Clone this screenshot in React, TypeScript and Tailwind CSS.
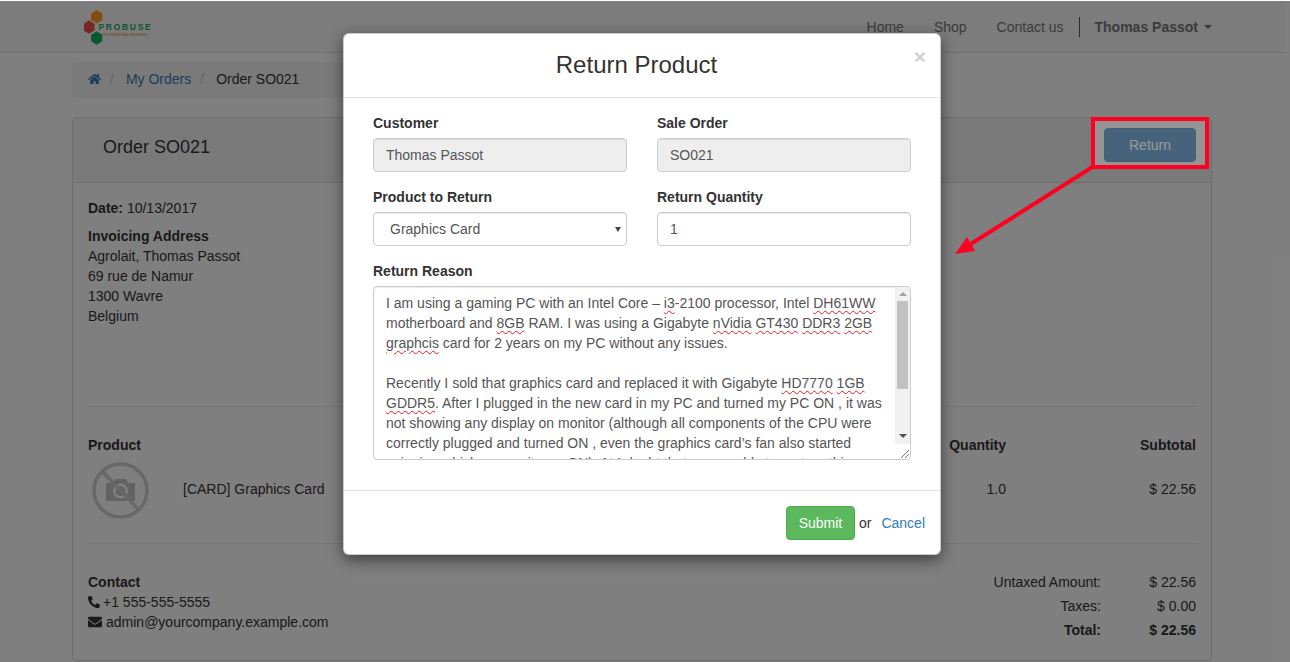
import { FaEnvelope, FaHome, FaPhone } from "react-icons/fa";

const spell = "underline decoration-wavy decoration-[#e02020] decoration-1 underline-offset-2";

function Typo({ children }: { children: string }) {
  return <span className={spell}>{children}</span>;
}

function Logo() {
  return (
    <svg width="74" height="36" viewBox="0 0 74 36" className="block">
      <polygon points="12.7,1 18.3,4.5 18.3,11 12.7,14.4 7.1,11 7.1,4.5" fill="#ff9a20" />
      <polygon points="5,11.3 10.6,14.8 10.6,21.3 5,24.7 -0.6,21.3 -0.6,14.8" fill="#f05050" />
      <polygon points="12.7,22.3 18.3,25.8 18.3,32.3 12.7,35.7 7.1,32.3 7.1,25.8" fill="#10b060" />
      <text x="14.5" y="21" fontSize="8.5" fontWeight="700" letterSpacing="1.7" fill="#20a868" fontFamily="Liberation Sans, sans-serif">
        PROBUSE
      </text>
      <text x="19" y="26.5" fontSize="3.4" fill="#d08a40" fontFamily="Liberation Sans, sans-serif">
        PROFESSIONAL BUSINESS
      </text>
    </svg>
  );
}

function NoPhoto() {
  return (
    <svg width="57" height="57" viewBox="0 0 57 57" className="block">
      <circle cx="28.5" cy="28.5" r="26.5" fill="none" stroke="#d0d0d0" strokeWidth="3.5" />
      <path d="M14 21h7l3-4h10l2 4h7v18H14z" fill="#c4c4c4" />
      <circle cx="28.5" cy="29" r="7.5" fill="#ffffff" />
      <circle cx="28.5" cy="29" r="5" fill="#c4c4c4" />
      <path d="M10 9 L47 48" stroke="#d0d0d0" strokeWidth="3.5" />
    </svg>
  );
}

function PageBehind() {
  return (
    <div className="w-[1285px] pt-[2px]">
      <nav className="h-[51px] bg-[#f8f8f8] border-b border-[#e7e7e7]">
        <div className="w-[1140px] ml-[72px] h-[50px] flex items-center justify-between">
          <div className="pl-3">
            <Logo />
          </div>
          <div className="flex items-center text-[#777]">
            <span>Home</span>
            <span className="ml-[30px]">Shop</span>
            <span className="ml-[30px]">Contact us</span>
            <span className="ml-[15px] h-5 border-l border-[#555]" />
            <span className="ml-[15px] font-bold text-[#777]">Thomas Passot</span>
            <span className="ml-[6px] w-0 h-0 border-x-4 border-x-transparent border-t-4 border-t-[#777]" />
          </div>
        </div>
      </nav>
      <div className="w-[1140px] ml-[72px] mt-[9px]">
        <div className="w-[570px] h-9 bg-[#f5f5f5] rounded px-4 pb-[2px] flex items-center">
          <FaHome className="text-[#337ab7] text-[14px] w-[13px]" />
          <span className="ml-[9px] text-[#ccc]">/</span>
          <span className="ml-[12px] text-[#337ab7]">My Orders</span>
          <span className="ml-[9px] text-[#ccc]">/</span>
          <span className="ml-[12px]">Order SO021</span>
        </div>
        <div className="mt-[19px] h-[544px] border border-[#ddd] rounded overflow-hidden">
          <div className="h-[65px] bg-[#f5f5f5] border-b border-[#ddd] pl-[30px] pr-[15px] flex items-start justify-between">
            <h2 className="text-[18px] leading-5 mt-[19px]">Order SO021</h2>
            <button className="w-[92px] h-[34px] mt-[10px] rounded bg-[#337ab7] border border-[#2e6da4] text-white">Return</button>
          </div>
          <div className="p-[15px]">
            <div>
              <b>Date:</b> 10/13/2017
            </div>
            <div className="mt-2">
              <b>Invoicing Address</b>
              <div>Agrolait, Thomas Passot</div>
              <div>69 rue de Namur</div>
              <div>1300 Wavre</div>
              <div>Belgium</div>
            </div>
            <hr className="mt-[80px] border-[#eee]" />
            <div className="mt-[28px] flex font-bold">
              <div className="flex-1">Product</div>
              <div className="w-[200px] text-right">Quantity</div>
              <div className="w-[190px] text-right">Subtotal</div>
            </div>
            <div className="mt-[7px] h-[81px] flex">
              <div className="flex-1 flex pl-1">
                <NoPhoto />
                <div className="ml-[34px] mt-[17px]">[CARD] Graphics Card</div>
              </div>
              <div className="w-[200px] text-right mt-[17px]">1.0</div>
              <div className="w-[190px] text-right mt-[17px]">$ 22.56</div>
            </div>
            <hr className="border-[#eee]" />
            <div className="mt-[28px] flex justify-between">
              <div>
                <b>Contact</b>
                <div className="flex items-center">
                  <FaPhone className="w-[12px] h-[12px] mr-[3px] -scale-x-100" />
                  <span>+1 555-555-5555</span>
                </div>
                <div className="flex items-center">
                  <FaEnvelope className="w-[14px] h-[14px] mr-[4px]" />
                  <span>admin@yourcompany.example.com</span>
                </div>
              </div>
              <div className="w-[250px] grid grid-cols-[1fr_95px] text-right gap-y-1">
                <div>Untaxed Amount:</div>
                <div>$ 22.56</div>
                <div>Taxes:</div>
                <div>$ 0.00</div>
                <div className="font-bold">Total:</div>
                <div className="font-bold">$ 22.56</div>
              </div>
            </div>
          </div>
        </div>
      </div>
    </div>
  );
}

function Annotation() {
  return (
    <>
      <div className="absolute left-[1091px] top-[117px] w-[118px] h-[52px] border-4 border-[#ff0020] bg-white/20" />
      <svg className="absolute left-[950px] top-[160px]" width="150" height="100" viewBox="0 0 150 100">
        <line x1="144" y1="6" x2="16" y2="87" stroke="#ff0020" strokeWidth="4" />
        <polygon points="5,94 17,77 25,91" fill="#ff0020" />
      </svg>
    </>
  );
}

function Scrollbar() {
  return (
    <div className="w-[15px] shrink-0 flex flex-col">
      <div className="h-[157px] bg-[#f1f1f1] flex flex-col items-center">
        <div className="mt-[5px] w-0 h-0 border-x-[4px] border-x-transparent border-b-[4px] border-b-[#a3a3a3]" />
        <div className="mt-[5px] w-[11px] h-[88px] bg-[#c1c1c1]" />
        <div className="mt-[45px] w-0 h-0 border-x-[4px] border-x-transparent border-t-[4px] border-t-[#505050]" />
      </div>
      <div className="flex-1 flex items-end justify-end">
        <svg width="10" height="10" viewBox="0 0 10 10" className="block">
          <path d="M1 9L9 1M5 9L9 5" stroke="#777" strokeWidth="1" />
        </svg>
      </div>
    </div>
  );
}

function ReturnModal() {
  return (
    <div className="absolute left-[343px] top-[33px] w-[598px] h-[522px] bg-white rounded-md border border-black/20 shadow-[0_5px_15px_rgba(0,0,0,0.5)] flex flex-col">
      <div className="relative h-[64px] border-b border-[#e5e5e5] flex items-center justify-center pr-[11px] pb-[2px]">
        <h4 className="text-[24px] leading-[26px]">Return Product</h4>
        <span className="absolute right-[14px] top-[12px] text-[21px] leading-[21px] font-bold text-black/20">×</span>
      </div>
      <div className="flex-1 px-[29px] pt-[15px]">
        <div className="grid grid-cols-2 gap-x-[30px]">
          <div>
            <label className="block font-bold h-5 mb-[5px]">Customer</label>
            <input readOnly value="Thomas Passot" className="w-full h-[34px] px-3 border border-[#ccc] rounded bg-[#eee] text-[#555] shadow-[inset_0_1px_1px_rgba(0,0,0,0.075)]" />
          </div>
          <div>
            <label className="block font-bold h-5 mb-[5px]">Sale Order</label>
            <input readOnly value="SO021" className="w-full h-[34px] px-3 border border-[#ccc] rounded bg-[#eee] text-[#555] shadow-[inset_0_1px_1px_rgba(0,0,0,0.075)]" />
          </div>
          <div className="mt-[15px]">
            <label className="block font-bold h-5 mb-[5px]">Product to Return</label>
            <div className="relative">
              <select defaultValue="card" className="block appearance-none w-full h-[34px] pl-4 pr-6 border border-[#ccc] rounded bg-white text-[#555] shadow-[inset_0_1px_1px_rgba(0,0,0,0.075)]">
                <option value="card">Graphics Card</option>
              </select>
              <span className="absolute right-[6px] top-[15px] w-0 h-0 border-x-[3px] border-x-transparent border-t-[5px] border-t-[#444]" />
            </div>
          </div>
          <div className="mt-[15px]">
            <label className="block font-bold h-5 mb-[5px]">Return Quantity</label>
            <input readOnly value="1" className="w-full h-[34px] px-3 border border-[#ccc] rounded bg-white text-[#555] shadow-[inset_0_1px_1px_rgba(0,0,0,0.075)]" />
          </div>
        </div>
        <label className="block font-bold h-5 mt-[15px] mb-[5px]">Return Reason</label>
        <div className="h-[174px] border border-[#ccc] rounded flex overflow-hidden text-[#555] shadow-[inset_0_1px_1px_rgba(0,0,0,0.075)]">
          <div className="flex-1 pl-3 pt-[6px] pr-1 overflow-hidden">
            <p>
              I am using a gaming PC with an Intel Core – <Typo>i3</Typo>-2100 processor, Intel <Typo>DH61WW</Typo> motherboard and <Typo>8GB</Typo> RAM. I was using a Gigabyte <Typo>nVidia</Typo> <Typo>GT430</Typo> <Typo>DDR3</Typo> <Typo>2GB</Typo> <Typo>graphcis</Typo> card for 2 years on my PC without any issues.
            </p>
            <p className="mt-5">
              Recently I sold that graphics card and replaced it with Gigabyte <Typo>HD7770</Typo> <Typo>1GB</Typo> <Typo>GDDR5</Typo>. After I plugged in the new card in my PC and turned my PC ON , it was not showing any display on monitor (although all components of the CPU were correctly plugged and turned ON , even the graphics card’s fan also started spinning which means it was ON). At I doubt that was unable to restore this
            </p>
          </div>
          <Scrollbar />
        </div>
      </div>
      <div className="h-[64px] border-t border-[#e5e5e5] pr-[15px] pt-[1px] flex items-center justify-end">
        <button className="w-[69px] h-[34px] rounded bg-[#5cb85c] border border-[#4cae4c] text-white">Submit</button>
        <span className="ml-1">or</span>
        <span className="ml-[10px] text-[#337ab7]">Cancel</span>
      </div>
    </div>
  );
}

export default function App() {
  return (
    <div className="relative w-[1290px] h-[662px] overflow-hidden bg-white text-[14px] leading-5 text-[#333] font-['Liberation_Sans',Arial,sans-serif]">
      <PageBehind />
      <div className="absolute inset-0 top-[1px] bg-black/50" />
      <Annotation />
      <ReturnModal />
    </div>
  );
}
